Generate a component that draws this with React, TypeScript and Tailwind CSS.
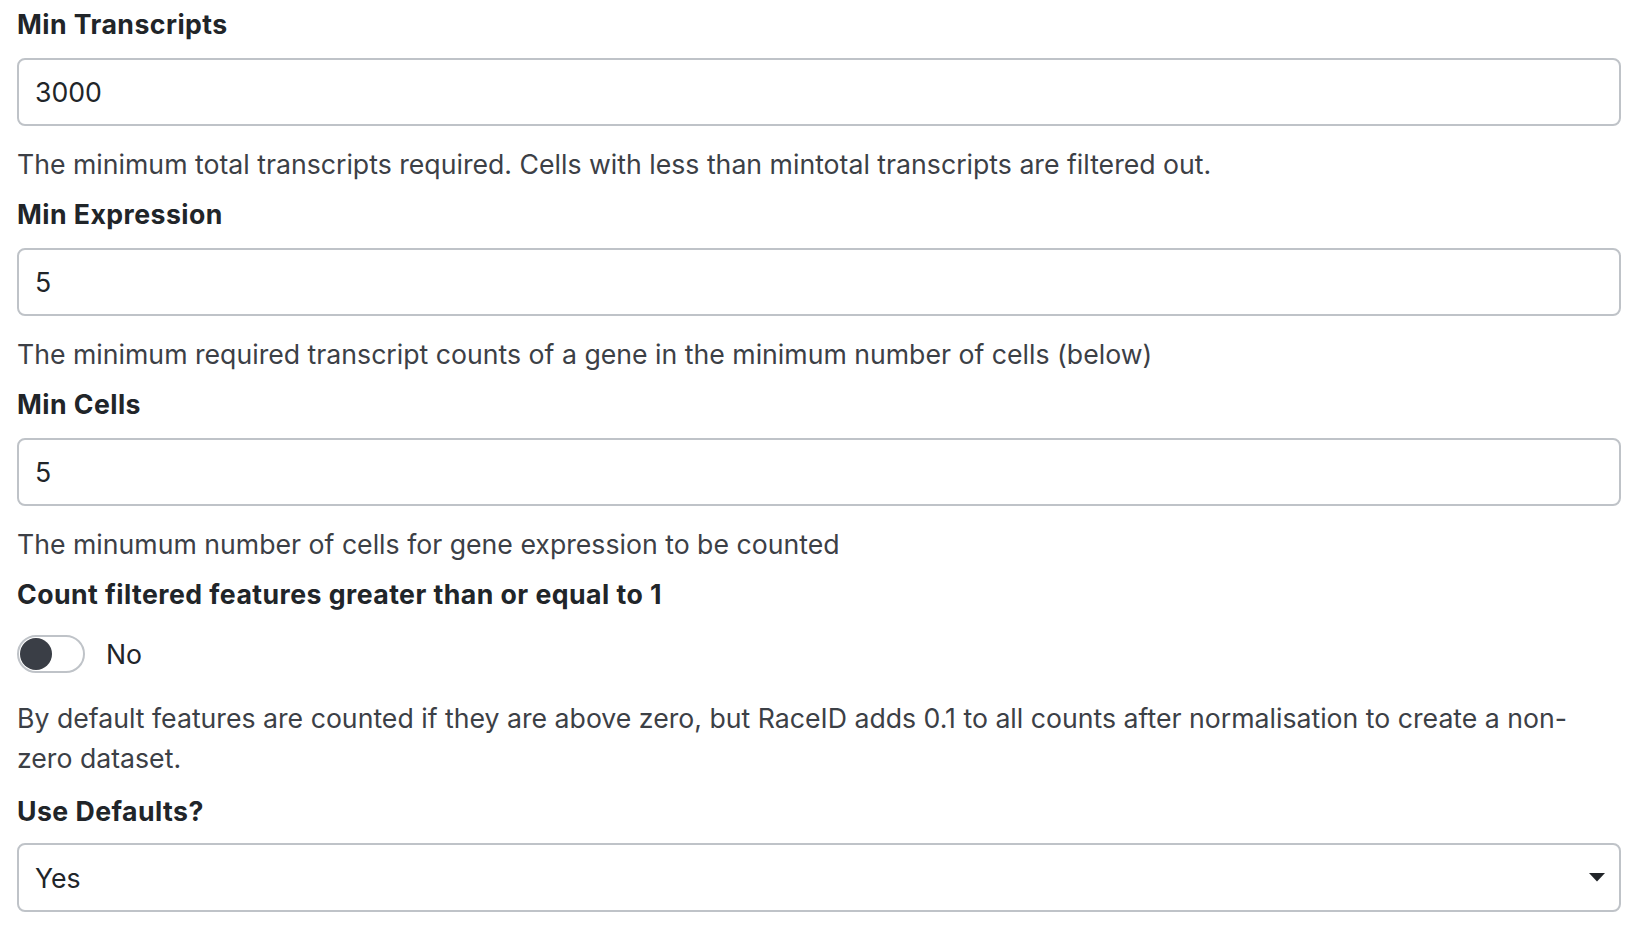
import React from "react";

const labelCls = "block font-bold text-[26.67px] leading-[40px] tracking-[0.45px] text-[#212529]";
const helpCls = "text-[26.67px] leading-[40px] text-[#3c4046]";
const inputCls =
  "w-full h-[68px] border-2 border-[#bfc3c8] rounded-[8px] px-[16px] flex items-center text-[26.67px] text-[#212529] bg-white";

function Field({ label, value, help, first }: { label: string; value: string; help: string; first?: boolean }) {
  return (
    <div className={first ? "" : "mt-[10px]"}>
      <label className={labelCls}>{label}</label>
      <div className={"mt-[14px] " + inputCls}>{value}</div>
      <p className={"mt-[18px] " + helpCls}>{help}</p>
    </div>
  );
}

export default function App() {
  return (
    <div
      className="bg-white w-[1632px] h-[938px] overflow-hidden pt-[4px] pl-[17px] pr-[11px]"
      style={{ fontFamily: "Inter, 'Noto Sans', sans-serif" }}
    >
      <Field
        first
        label="Min Transcripts"
        value="3000"
        help="The minimum total transcripts required. Cells with less than mintotal transcripts are filtered out."
      />
      <Field
        label="Min Expression"
        value="5"
        help="The minimum required transcript counts of a gene in the minimum number of cells (below)"
      />
      <Field label="Min Cells" value="5" help="The minumum number of cells for gene expression to be counted" />

      <div className="mt-[10px]">
        <label className={labelCls}>Count filtered features greater than or equal to 1</label>
        <div className="mt-[20px] flex items-center">
          <div className="w-[68px] h-[38px] rounded-full border-2 border-[#bfc3c8] bg-white flex items-center pl-[1px]">
            <div className="w-[32px] h-[32px] rounded-full bg-[#3a3e46]" />
          </div>
          <span className="ml-[21px] text-[26.67px] leading-[40px] text-[#212529]">No</span>
        </div>
        <p className={"mt-[24px] " + helpCls}>
          By default features are counted if they are above zero, but RaceID adds 0.1 to all counts after normalisation to create a non-zero dataset.
        </p>
      </div>

      <div className="mt-[13px]">
        <label className={labelCls}>Use Defaults?</label>
        <div className="mt-[12px] w-full h-[69px] border-2 border-[#bfc3c8] rounded-[8px] pl-[16px] pr-[14px] flex items-center justify-between text-[26.67px] text-[#212529] bg-white">
          <span>Yes</span>
          <svg width="16" height="9" viewBox="0 0 16 9">
            <path d="M0 0 H16 L8 8.5 Z" fill="#212529" />
          </svg>
        </div>
      </div>
    </div>
  );
}
